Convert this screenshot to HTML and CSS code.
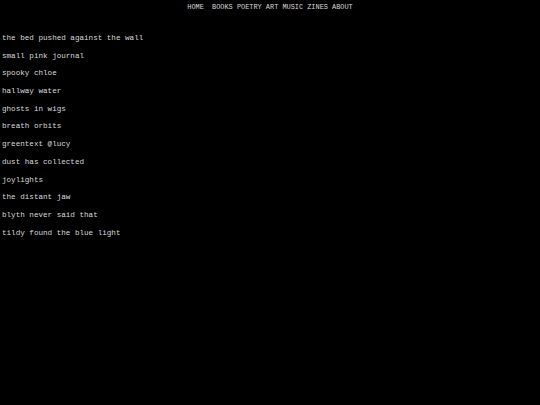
FILE: index.html
```html
<!DOCTYPE html>
<html>
<head>
<meta charset="utf-8">
<link rel="stylesheet" href="styles.css">
</head>
<body>
<nav class="nav"><a href="#">HOME</a>  <a href="#">BOOKS</a> <a href="#">POETRY</a> <a href="#">ART</a> <a href="#">MUSIC</a> <a href="#">ZINES</a> <a href="#">ABOUT</a></nav>
<ul class="list">
<li><a href="#">the bed pushed against the wall</a></li>
<li><a href="#">small pink journal</a></li>
<li><a href="#">spooky chloe</a></li>
<li><a href="#">hallway water</a></li>
<li><a href="#">ghosts in wigs</a></li>
<li><a href="#">breath orbits</a></li>
<li><a href="#">greentext @lucy</a></li>
<li><a href="#">dust has collected</a></li>
<li><a href="#">joylights</a></li>
<li><a href="#">the distant jaw</a></li>
<li><a href="#">blyth never said that</a></li>
<li><a href="#">tildy found the blue light</a></li>
</ul>
</body>
</html>
```
FILE: styles.css
```css
html, body {
  margin: 0;
  padding: 0;
  background: #000;
}
body {
  font-family: "Liberation Mono", "Courier New", monospace;
  color: #dadada;
}
a {
  color: #dadada;
  text-decoration: none;
}
.nav {
  text-align: center;
  font-size: 6.9px;
  line-height: 12px;
  padding-top: 1px;
  white-space: pre;
}
.list {
  list-style: none;
  margin: 0;
  padding: 20px 0 0 2px;
  font-size: 7.6px;
}
.list li {
  line-height: 10px;
  margin-bottom: 7.7px;
}
```
